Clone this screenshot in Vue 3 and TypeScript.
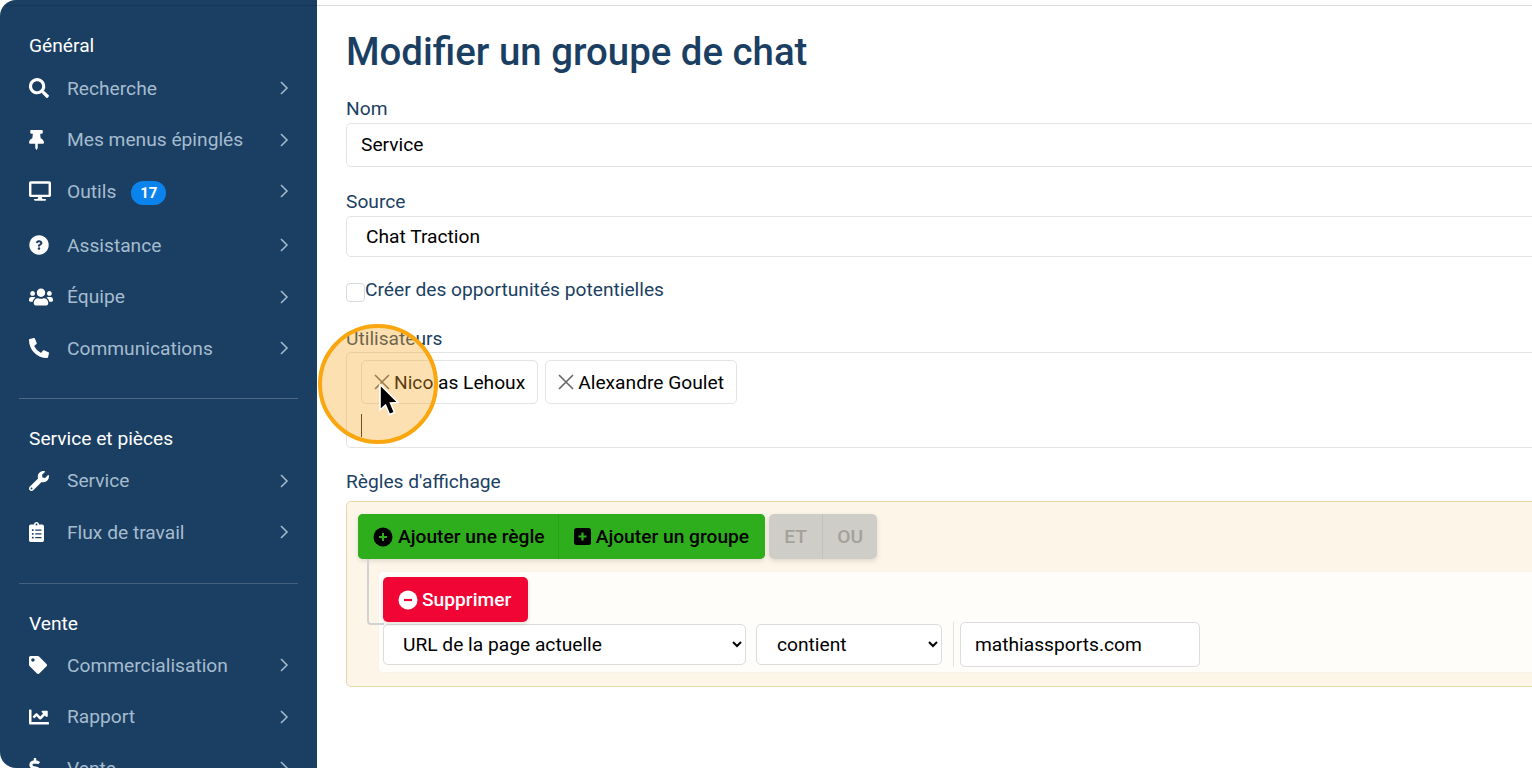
<script setup lang="ts">
interface NavItem { label: string; vb: string; d: string; w: number; badge?: string; inner?: string }
interface NavSection { title: string; items: NavItem[] }

const sections: NavSection[] = [
  { title: 'Général', items: [
    { label: 'Recherche', vb: '0 0 512 512', w: 20, d: 'M505 442.7L405.3 343c-4.5-4.5-10.6-7-17-7H372c27.6-35.3 44-79.7 44-128C416 93.1 322.9 0 208 0S0 93.1 0 208s93.1 208 208 208c48.3 0 92.7-16.4 128-44v16.3c0 6.4 2.5 12.5 7 17l99.7 99.7c9.4 9.4 24.6 9.4 33.9 0l28.3-28.3c9.4-9.4 9.4-24.6.1-34zM208 336c-70.7 0-128-57.2-128-128 0-70.7 57.2-128 128-128 70.7 0 128 57.2 128 128 0 70.7-57.2 128-128 128z' },
    { label: 'Mes menus épinglés', vb: '0 0 384 512', w: 15, d: 'M298.028 214.267L285.793 96H328c13.255 0 24-10.745 24-24V24c0-13.255-10.745-24-24-24H56C42.745 0 32 10.745 32 24v48c0 13.255 10.745 24 24 24h42.207L85.972 214.267C37.465 236.82 0 277.261 0 328c0 13.255 10.745 24 24 24h136v104.007c0 1.242.289 2.467.845 3.578l24 48c2.941 5.882 11.364 5.893 14.311 0l24-48a8.008 8.008 0 0 0 .845-3.578V352h136c13.255 0 24-10.745 24-24-.001-51.183-37.983-91.42-85.973-113.733z' },
    { label: 'Outils', badge: '17', vb: '0 0 576 512', w: 22, d: 'M528 0H48C21.5 0 0 21.5 0 48v320c0 26.5 21.5 48 48 48h192l-16 48h-72c-13.3 0-24 10.7-24 24s10.7 24 24 24h272c13.3 0 24-10.7 24-24s-10.7-24-24-24h-72l-16-48h192c26.5 0 48-21.5 48-48V48c0-26.5-21.5-48-48-48zm-16 352H64V64h448v288z' },
    { label: 'Assistance', vb: '0 0 512 512', w: 20, d: 'M504 256c0 136.997-111.043 248-248 248S8 392.997 8 256C8 119.083 119.043 8 256 8s248 111.083 248 248z', inner: 'M262.655 90c-54.497 0-89.255 22.957-116.549 63.758-3.536 5.286-2.353 12.415 2.715 16.258l34.699 26.31c5.205 3.947 12.621 3.008 16.665-2.122 17.864-22.658 30.113-35.797 57.303-35.797 20.429 0 45.698 13.148 45.698 32.958 0 14.976-12.363 22.667-32.534 33.976C247.128 238.528 216 254.941 216 296v4c0 6.627 5.373 12 12 12h56c6.627 0 12-5.373 12-12v-1.333c0-28.462 83.186-29.647 83.186-106.667 0-58.002-60.165-102-116.531-102zM256 338c-25.365 0-46 20.635-46 46 0 25.364 20.635 46 46 46s46-20.636 46-46c0-25.365-20.635-46-46-46z' },
    { label: 'Équipe', vb: '0 0 640 512', w: 24, d: 'M96 224c35.3 0 64-28.7 64-64s-28.7-64-64-64-64 28.7-64 64 28.7 64 64 64zm448 0c35.3 0 64-28.7 64-64s-28.7-64-64-64-64 28.7-64 64 28.7 64 64 64zm32 32h-64c-17.6 0-33.5 7.1-45.1 18.6 40.3 22.1 68.9 62 75.1 109.4h66c17.7 0 32-14.3 32-32v-32c0-35.3-28.7-64-64-64zm-256 0c61.9 0 112-50.1 112-112S381.9 32 320 32 208 82.1 208 144s50.1 112 112 112zm76.8 32h-8.3c-20.8 10-43.9 16-68.5 16s-47.6-6-68.5-16h-8.3C179.6 288 128 339.6 128 403.2V432c0 26.5 21.5 48 48 48h288c26.5 0 48-21.5 48-48v-28.8c0-63.6-51.6-115.2-115.2-115.2zm-223.7-13.4C161.5 263.1 145.6 256 128 256H64c-35.3 0-64 28.7-64 64v32c0 17.7 14.3 32 32 32h65.9c6.3-47.4 34.9-87.3 75.2-109.4z' },
    { label: 'Communications', vb: '0 0 512 512', w: 20, d: 'M497.39 361.8l-112-48a24 24 0 0 0-28 6.9l-49.6 60.6A370.66 370.66 0 0 1 130.6 204.11l60.6-49.6a23.94 23.94 0 0 0 6.9-28l-48-112A24.16 24.16 0 0 0 122.6.61l-104 24A24 24 0 0 0 0 48c0 256.5 207.9 464 464 464a24 24 0 0 0 23.4-18.6l24-104a24.29 24.29 0 0 0-14.01-27.6z' },
  ] },
  { title: 'Service et pièces', items: [
    { label: 'Service', vb: '0 0 512 512', w: 20, d: 'M507.73 109.1c-2.24-9.03-13.54-12.09-20.12-5.51l-74.36 74.36-67.88-11.31-11.31-67.88 74.36-74.36c6.62-6.62 3.43-17.9-5.66-20.16-47.38-11.74-99.55.91-136.58 37.93-39.64 39.64-50.55 97.1-34.05 147.2L18.74 402.76c-24.99 24.99-24.99 65.51 0 90.5 24.99 24.99 65.51 24.99 90.5 0l213.21-213.21c50.12 16.71 107.47 5.68 147.37-34.22 37.07-37.07 49.7-89.32 37.91-136.73zM64 472c-13.25 0-24-10.75-24-24 0-13.26 10.75-24 24-24s24 10.74 24 24c0 13.25-10.75 24-24 24z' },
    { label: 'Flux de travail', vb: '0 0 384 512', w: 15, d: 'M336 64h-80c0-35.3-28.7-64-64-64s-64 28.7-64 64H48C21.5 64 0 85.5 0 112v352c0 26.5 21.5 48 48 48h288c26.5 0 48-21.5 48-48V112c0-26.5-21.5-48-48-48zM96 424c-13.3 0-24-10.7-24-24s10.7-24 24-24 24 10.7 24 24-10.7 24-24 24zm0-96c-13.3 0-24-10.7-24-24s10.7-24 24-24 24 10.7 24 24-10.7 24-24 24zm0-96c-13.3 0-24-10.7-24-24s10.7-24 24-24 24 10.7 24 24-10.7 24-24 24zm96-192c13.3 0 24 10.7 24 24s-10.7 24-24 24-24-10.7-24-24 10.7-24 24-24zm128 368c0 4.4-3.6 8-8 8H168c-4.4 0-8-3.6-8-8v-16c0-4.4 3.6-8 8-8h144c4.4 0 8 3.6 8 8v16zm0-96c0 4.4-3.6 8-8 8H168c-4.4 0-8-3.6-8-8v-16c0-4.4 3.6-8 8-8h144c4.4 0 8 3.6 8 8v16zm0-96c0 4.4-3.6 8-8 8H168c-4.4 0-8-3.6-8-8v-16c0-4.4 3.6-8 8-8h144c4.4 0 8 3.6 8 8v16z' },
  ] },
  { title: 'Vente', items: [
    { label: 'Commercialisation', vb: '0 0 512 512', w: 18, d: 'M0 252.118V48C0 21.49 21.49 0 48 0h204.118a48 48 0 0 1 33.941 14.059l211.882 211.882c18.745 18.745 18.745 49.137 0 67.882L293.823 497.941c-18.745 18.745-49.137 18.745-67.882 0L14.059 286.059A48 48 0 0 1 0 252.118zM112 64c-26.51 0-48 21.49-48 48s21.49 48 48 48 48-21.49 48-48-21.49-48-48-48z' },
    { label: 'Rapport', vb: '0 0 512 512', w: 20, d: 'M496 384H64V80c0-8.84-7.16-16-16-16H16C7.16 64 0 71.16 0 80v336c0 17.67 14.33 32 32 32h464c8.84 0 16-7.16 16-16v-32c0-8.84-7.16-16-16-16zM464 96H345.94c-21.38 0-32.09 25.85-16.97 40.97l32.4 32.4L288 242.75l-73.37-73.37c-12.5-12.5-32.76-12.5-45.25 0l-68.69 68.69c-6.25 6.25-6.25 16.38 0 22.63l22.62 22.62c6.25 6.25 16.38 6.25 22.63 0L192 237.25l73.37 73.37c12.5 12.5 32.76 12.5 45.25 0l96-96 32.4 32.4c15.12 15.12 40.97 4.41 40.97-16.97V112c.01-8.84-7.15-16-15.99-16z' },
    { label: 'Vente', vb: '0 0 288 512', w: 12, d: 'M209.2 233.4l-108-31.6C88.7 198.2 80 186.5 80 173.5c0-16.3 13.2-29.5 29.5-29.5h66.3c12.2 0 24.2 3.7 34.2 10.5 6.1 4.1 14.3 3.1 19.5-2l34.8-34c7.1-6.9 6.1-18.4-1.8-24.5C238 74.8 207.4 64.1 176 64V16c0-8.8-7.2-16-16-16h-32c-8.8 0-16 7.2-16 16v48h-2.5C45.8 64-5.4 118.7.5 183.6c4.2 46.1 39.4 83.6 83.8 96.6l102.5 30c12.5 3.7 21.2 15.3 21.2 28.3 0 16.3-13.2 29.5-29.5 29.5h-66.3C100 368 88 364.3 78 357.5c-6.1-4.1-14.3-3.1-19.5 2l-34.8 34c-7.1 6.9-6.1 18.4 1.8 24.5 24.5 19.2 55.1 29.9 86.5 30v48c0 8.8 7.2 16 16 16h32c8.8 0 16-7.2 16-16v-48.2c46.6-.9 90.3-28.6 105.7-72.7 21.5-61.6-14.6-124.8-72.5-141.7z' },
  ] },
];

const users: string[] = ['Nicolas Lehoux', 'Alexandre Goulet'];
</script>

<template>
  <div class="page">
    <aside class="sidebar">
      <section v-for="s in sections" :key="s.title" class="section">
        <h3 class="section-title">{{ s.title }}</h3>
        <a v-for="item in s.items" :key="item.label" class="item" :class="{ tall: item.badge }">
          <span class="icon-cell">
            <svg :viewBox="item.vb" :style="{ width: item.w + 'px' }" class="icon">
              <path :d="item.d" fill="currentColor" />
              <path v-if="item.inner" :d="item.inner" fill="#1b3f63" transform="translate(256 256) scale(.72) translate(-256 -260)" />
            </svg>
          </span>
          <span class="item-label">{{ item.label }}</span>
          <span v-if="item.badge" class="badge">{{ item.badge }}</span>
          <svg class="chev" viewBox="0 0 10 16"><path d="M2 2l6 6-6 6" fill="none" stroke="currentColor" stroke-width="1.5" /></svg>
        </a>
      </section>
    </aside>

    <main class="main">
      <div class="content">
        <h1 class="title">Modifier un groupe de chat</h1>

        <label class="label first">Nom</label>
        <input class="field name" value="Service" />

        <label class="label source-label">Source</label>
        <select class="field source"><option>Chat Traction</option></select>

        <label class="check-row">
          <input type="checkbox" class="check" />
          <span>Créer des opportunités potentielles</span>
        </label>

        <label class="label users-label">Utilisateurs</label>
        <div class="users">
          <div class="chips">
            <span v-for="u in users" :key="u" class="chip">
              <svg class="x" viewBox="0 0 16 16"><path d="M1 1l14 14M15 1L1 15" stroke="currentColor" stroke-width="1.6" fill="none" /></svg>
              {{ u }}
            </span>
          </div>
          <div class="caret"></div>
        </div>

        <label class="label rules-label">Règles d'affichage</label>
        <div class="rules">
          <div class="rules-head">
            <div class="btn-group green">
              <button class="gbtn add-rule">
                <svg class="bi" viewBox="0 0 20 20"><circle cx="10" cy="10" r="9.500" fill="#000" /><path d="M6 10h8M10 6v8" stroke="#2fae1d" stroke-width="2" fill="none" /></svg>
                Ajouter une règle
              </button>
              <button class="gbtn add-group">
                <svg class="bi square" viewBox="0 0 17 17"><rect width="17" height="17" rx="2.500" fill="#000" /><path d="M4.500 8.500h8M8.500 4.500v8" stroke="#2fae1d" stroke-width="2.200" fill="none" /></svg>
                Ajouter un groupe
              </button>
            </div>
            <div class="btn-group grey">
              <button class="ybtn et">ET</button>
              <button class="ybtn ou">OU</button>
            </div>
          </div>

          <div class="rule">
            <span class="connector"></span>
            <button class="del">
              <svg class="bi" viewBox="0 0 20 20"><circle cx="10" cy="10" r="9.500" fill="#fff" /><path d="M6 10h8" stroke="#f00534" stroke-width="2.200" fill="none" /></svg>
              Supprimer
            </button>
            <div class="rule-row">
              <select class="rsel url"><option>URL de la page actuelle</option></select>
              <select class="rsel op"><option>contient</option></select>
              <div class="val-wrap"><input class="rinput" value="mathiassports.com" /></div>
            </div>
          </div>
        </div>
      </div>
    </main>

    <div class="spot">
      <svg class="cursor" viewBox="0 0 24 35"><path d="M3 1.500V27L8.500 22 12.500 31.500 17.500 29.500 13.500 20 21 19.500Z" fill="#000" stroke="#fff" stroke-width="1.600" /></svg>
    </div>
  </div>
</template>

<style>
html, body { margin: 0; background: #fff; overflow: hidden; }
</style>

<style scoped>
.page {
  position: relative;
  display: flex;
  width: 1532px;
  height: 768px;
  overflow: hidden;
  font-family: Roboto, "Liberation Sans", sans-serif;
  font-size: 19.2px;
  background: #fff;
}
.sidebar {
  position: relative;
  flex: 0 0 317px;
  box-sizing: border-box;
  height: 768px;
  overflow: hidden;
  background: #1b3f63;
  border-radius: 16px 0 0 16px;
  padding: 33px 19px 0;
}
.sidebar::before {
  content: "";
  position: absolute;
  left: 0;
  right: 0;
  top: 5px;
  height: 1px;
  background: rgba(0, 0, 0, .12);
}
.section { padding-bottom: 23.500px; border-bottom: 1px solid rgba(255, 255, 255, .22); margin-bottom: 27px; }
.section:nth-child(2) { border-bottom-color: rgba(255, 255, 255, .18); padding-bottom: 24.500px; }
.section:last-child { border-bottom: 0; }
.section-title {
  margin: 0 0 3.500px;
  padding-left: 10px;
  font-size: 19.200px;
  font-weight: 400;
  line-height: 26px;
  color: #fff;
}
.section:last-child .section-title { margin-bottom: 2.500px; }
.item {
  display: flex;
  align-items: center;
  height: 51.600px;
  padding-left: 10px;
  color: #a5bccf;
}
.item.tall { box-sizing: border-box; height: 53.600px; padding-bottom: 2px; }
.icon-cell { flex: 0 0 38px; display: flex; align-items: center; color: #fff; }
.icon { display: block; height: 20px; }
.item-label { white-space: nowrap; }
.badge {
  margin-left: 15px;
  margin-top: 3px;
  width: 35px;
  height: 24px;
  border-radius: 12px;
  background: #0a84ec;
  color: #fff;
  font-size: 15px;
  font-weight: 700;
  line-height: 24px;
  text-align: center;
}
.chev { width: 10px; height: 16px; margin-left: auto; margin-right: 9px; color: #a5bccf; }

.main { flex: 1; min-width: 0; overflow: hidden; }
.content {
  width: 1400px;
  margin-top: 5px;
  border-top: 1px solid #d9d9d9;
  padding-left: 29px;
  color: #1b3f63;
}
.title {
  margin: 25px 0 0;
  font-size: 38.400px;
  line-height: 42px;
  font-weight: 500;
  color: #1b3f63;
}
.label { display: block; line-height: 24px; }
.first { margin-top: 24px; }
.field {
  display: block;
  box-sizing: border-box;
  width: 100%;
  font: inherit;
  color: #000;
  background: #fff;
  border: 1px solid #e3e3e3;
  border-radius: 5px;
  outline: 0;
}
.name { height: 44px; padding: 0 14px 1px; margin-top: 2px; }
.source-label { margin-top: 23px; }
.source { height: 41px; padding: 0 15px; margin-top: 2px; }
.check-row { display: flex; align-items: flex-start; margin-top: 20px; height: 26px; line-height: 26px; }
.check {
  appearance: none;
  flex: 0 0 19px;
  width: 19px;
  height: 19px;
  margin: 6px 0 0;
  background: #fff;
  border: 1px solid #d9d9d9;
  border-radius: 4px;
}
.users-label { margin-top: 24px; }
.users {
  box-sizing: border-box;
  height: 96px;
  margin-top: 1px;
  padding: 7px 14px;
  border: 1px solid #e3e3e3;
  border-radius: 5px;
}
.chips { display: flex; gap: 7px; }
.chip {
  display: flex;
  align-items: center;
  gap: 4px;
  box-sizing: border-box;
  height: 44px;
  padding: 0 12px 0 12px;
  color: #000;
  background: #fff;
  border: 1px solid #e3e3e3;
  border-radius: 5px;
}
.x { width: 16px; height: 16px; color: #666; }
.caret { width: 1px; height: 23px; margin: 10px 0 0 0; background: #222; }
.rules-label { margin-top: 22px; }
.rules {
  box-sizing: border-box;
  height: 186px;
  margin-top: 7px;
  padding: 12px 11px;
  background: #fdf5e8;
  border: 1px solid #e8d6a6;
  border-radius: 5px;
}
.rules-head { display: flex; gap: 4px; }
.btn-group { display: flex; height: 45px; border-radius: 5px; overflow: hidden; box-shadow: 0 2px 5px rgba(0, 0, 0, .12); }
button { font: inherit; border: 0; padding: 0; }
.green { background: #2fae1d; }
.gbtn {
  display: flex;
  align-items: center;
  gap: 5px;
  height: 45px;
  background: #2fae1d;
  color: #000;
  font-weight: 500;
}
.add-rule { padding: 0 13px 0 15px; }
.add-group { padding: 0 16px 0 15px; border-left: 1px solid #2a9f1a; }
.bi { width: 20px; height: 20px; display: block; }
.square { width: 17px; height: 17px; }
.ybtn {
  height: 45px;
  background: #cfcdc8;
  color: #a3a19c;
  font-weight: 500;
}
.et { width: 53px; }
.ou { width: 55px; border-left: 1px solid #c3c1bc; }
.rule {
  position: relative;
  margin: 12px -11px 0 20px;
  box-sizing: border-box;
  height: 102px;
  padding: 5px 5px 0 4px;
  background: #fffdfa;
  border: 1px solid #f8f3ea;
  border-radius: 4px;
}
.connector {
  position: absolute;
  left: -12px;
  top: -13px;
  width: 17px;
  height: 66px;
  box-sizing: border-box;
  border-left: 2px solid #d2d2d2;
  border-bottom: 2px solid #d2d2d2;
  border-bottom-left-radius: 4px;
}
.del {
  position: relative;
  display: flex;
  align-items: center;
  gap: 4px;
  width: 145px;
  height: 45px;
  padding-left: 15px;
  background: #f00534;
  color: #fff;
  font-weight: 500;
  border-radius: 5px;
  box-shadow: 0 2px 5px rgba(0, 0, 0, .12);
}
.rule-row { display: flex; align-items: flex-start; margin-top: 0; }
.rsel {
  box-sizing: border-box;
  height: 41px;
  margin-top: 2px;
  padding: 0 0 0 16px;
  font: inherit;
  color: #000;
  background: #fff;
  border: 1px solid #dcdcdc;
  border-radius: 5px;
  outline: 0;
}
.url { width: 363px; padding-left: 15px; }
.op { width: 186px; margin-left: 10px; }
.val-wrap { margin-left: 11px; padding-left: 6px; border-left: 1px solid #e3e3e3; }
.rinput {
  display: block;
  box-sizing: border-box;
  width: 240px;
  height: 45px;
  padding: 0 14px;
  font: inherit;
  color: #000;
  background: #fff;
  border: 1px solid #dcdcdc;
  border-radius: 5px;
  outline: 0;
}
.spot {
  position: absolute;
  left: 318px;
  top: 324px;
  width: 120px;
  height: 120px;
  box-sizing: border-box;
  border: 4px solid #f9a60f;
  border-radius: 50%;
  background: rgba(250, 170, 40, .36);
}
.cursor {
  position: absolute;
  left: 55px;
  top: 55px;
  width: 24px;
  height: 35px;
}
</style>
